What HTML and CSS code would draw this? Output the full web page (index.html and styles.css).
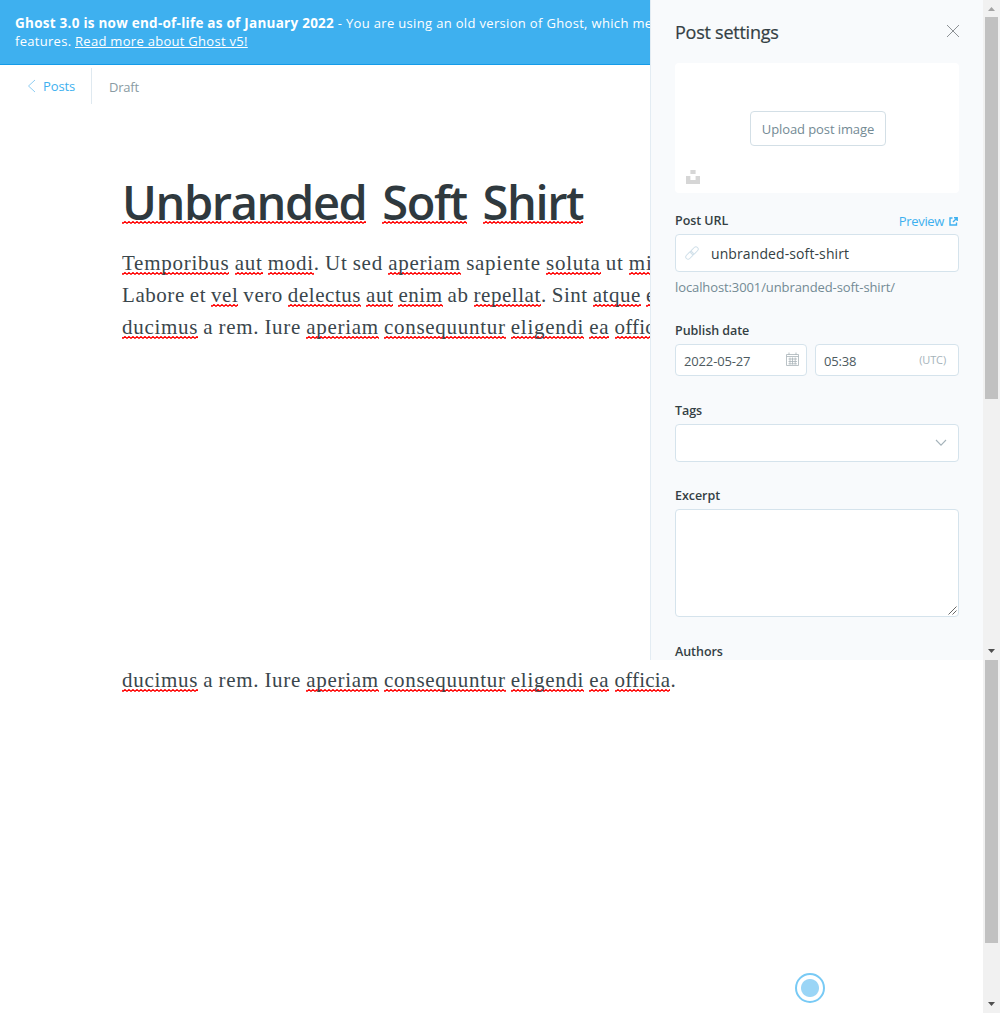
FILE: index.html
```html
<!DOCTYPE html>
<html lang="en">
<head>
<meta charset="utf-8">
<title>Post editor</title>
<link rel="stylesheet" href="styles.css">
</head>
<body>
<div class="app">
  <main class="editor">
    <div class="alert">
      <div class="alert-line"><b class="alert-strong">Ghost 3.0 is now end-of-life as of January 2022</b> <span class="alert-text">- You are using an old version of Ghost, which me</span></div>
      <div class="alert-line alert-second">features. <a class="alert-link">Read more about Ghost v5!</a></div>
    </div>
    <header class="toolbar">
      <a class="back"><svg width="9" height="14" viewBox="0 0 9 14"><path d="M8 1L1.5 7L8 13" fill="none" stroke="#8dcdf3"/></svg><span>Posts</span></a>
      <span class="status">Draft</span>
    </header>
    <h1 class="title"><u>Unbranded</u> <u>Soft</u> <u>Shirt</u></h1>
    <div class="prose">
      <div class="line l1"><u>Temporibus</u> <u>aut</u> <u>modi</u>. Ut sed <u>aperiam</u> sapiente <u>soluta</u> ut <u>mi</u></div>
      <div class="line l2">Labore et <u>vel</u> vero <u>delectus</u> <u>aut</u> <u>enim</u> ab <u>repellat</u>. Sint <u>atque</u> <u>e</u></div>
      <div class="line l3"><u>ducimus</u> a rem. Iure <u>aperiam</u> <u>consequuntur</u> <u>eligendi</u> <u>ea</u> <u class="tight">offic</u></div>
    </div>
    <div class="prose prose-tail">
      <div class="line l3"><u>ducimus</u> a rem. Iure <u>aperiam</u> <u>consequuntur</u> <u>eligendi</u> <u>ea</u> <u class="tight">officia</u>.</div>
    </div>
    <div class="beacon"></div>
  </main>

  <aside class="panel">
    <div class="panel-head">
      <h2 class="panel-title">Post settings</h2>
      <svg class="close" width="14" height="14" viewBox="0 0 14 14"><path d="M1 1L13 13M13 1L1 13" stroke="#808589" stroke-width=".9"/></svg>
    </div>
    <div class="uploader">
      <button class="upload-btn">Upload post image</button>
      <svg class="unsplash" width="14" height="14" viewBox="0 0 14 14"><path d="M4.400 0h5.200v4H4.400zM0 6h4.400v4h5.200V6H14v8H0z" fill="#d6d6d6"/></svg>
    </div>

    <div class="label-row">
      <label class="label">Post URL</label>
      <a class="preview"><span>Preview</span><svg width="9" height="9" viewBox="0 0 9 9"><path d="M3.500 1H1v7h6.500V5.500M5 .8h3.200V4M8 1L4 5" fill="none" stroke="#3eb0ef" stroke-width="1.400"/></svg></a>
    </div>
    <div class="field url">
      <svg width="14" height="14" viewBox="0 0 14 14"><g fill="none" stroke="#cfdfe9" transform="rotate(-45 7 7)"><rect x="-.8" y="4.700" width="8.600" height="4.600" rx="2.300"/><rect x="6.200" y="4.700" width="8.600" height="4.600" rx="2.300"/></g></svg>
      <span>unbranded-soft-shirt</span>
    </div>
    <p class="hint">localhost:3001/unbranded-soft-shirt/</p>

    <label class="label label-date">Publish date</label>
    <div class="date-row">
      <div class="field date"><span>2022-05-27</span><svg width="13" height="14" viewBox="0 0 13 14"><path d="M.5 2.500h12v11H.5zM.5 4.500h12M3 .5v2.500M10 .5v2.500M2.500 7h8.500M2.500 9.500h8.500M2.500 11.800h8.500M4 5.500v7M6.500 5.500v7M9.200 5.500v7" fill="none" stroke="#a9b4b9" stroke-width=".8"/></svg></div>
      <div class="field time"><span>05:38</span><small>(UTC)</small></div>
    </div>

    <label class="label label-tags">Tags</label>
    <div class="field tags"><svg width="12" height="8" viewBox="0 0 12 8"><path d="M1 1L6 6.200L11 1" fill="none" stroke="#a5b3ba" stroke-width="1.100"/></svg></div>

    <label class="label label-excerpt">Excerpt</label>
    <div class="field excerpt"><svg width="9" height="9" viewBox="0 0 9 9"><path d="M.5 8.500L8.500 .5M4.500 8.500L8.500 4.500" stroke="#555" stroke-width=".9"/></svg></div>

    <label class="label label-authors">Authors</label>
  </aside>

  <div class="scrollbar bar-top"><i class="arrow up"></i><i class="thumb"></i><i class="arrow down"></i></div>
  <div class="scrollbar bar-bottom"><i class="thumb"></i><i class="arrow down"></i></div>
</div>
</body>
</html>
```
FILE: styles.css
```css
* { box-sizing: border-box; }
body { margin: 0; background: #fff; font-family: "Open Sans", "Noto Sans", sans-serif; font-size: 13px; color: #343f44; overflow: hidden; }
.app { display: grid; grid-template-columns: 650px 333px 17px; grid-template-rows: 660px 353px; width: 1000px; height: 1013px; }
.editor { grid-column: 1 / 3; grid-row: 1 / 3; min-width: 0; position: relative; overflow: hidden; }
.alert { height: 65px; padding: 14px 15px 0; background: #3eb0ef; border-bottom: 1px solid #159be8; color: #fff; line-height: 18px; white-space: nowrap; font-weight: 500; }
.alert-line { height: 18px; letter-spacing: .33px; }
.alert-second { letter-spacing: .29px; }
.alert-strong { font-weight: 700; font-size: 13.5px; letter-spacing: .25px; }
.alert-link { text-decoration: underline; text-underline-offset: 1px; }
.toolbar { display: flex; padding-top: 3px; height: 39px; align-items: stretch; line-height: 34px; }
.back { display: flex; align-items: center; gap: 7px; width: 92px; padding-left: 27px; color: #3eb0ef; border-right: 1px solid #dfe9f0; letter-spacing: -.1px; }
.back span { margin-left: 0; }
.status { padding: 2px 0 0 17px; color: #8a9ba3; letter-spacing: -.2px; }
.title { margin: 70px 0 0 122px; height: 56px; font-size: 47px; line-height: 56px; font-weight: 600; letter-spacing: -1.4px; word-spacing: 5px; color: #2f393e; white-space: nowrap; }
u { text-decoration: none; background: url("data:image/svg+xml,%3Csvg xmlns='http://www.w3.org/2000/svg' width='4' height='3'%3E%3Cpath d='M-1 .4L1 2.500L3 .4L5 2.500' fill='none' stroke='red' stroke-width='1.100'/%3E%3C/svg%3E") 0 100% repeat-x; }
.title u { background-position: 0 51px; }
.prose { margin: 17px 0 0 122px; font: 21px/32px "Liberation Serif", serif; color: #3a464c; white-space: nowrap; word-spacing: -.8px; }
.l1 { letter-spacing: .74px; }
.l2 { letter-spacing: .55px; }
.l3 { letter-spacing: .71px; }
.tight { letter-spacing: .2px; }
.prose-tail { margin-top: 321px; }
.beacon { position: absolute; left: 795px; top: 973px; width: 30px; height: 30px; border: 2px solid #78caf5; border-radius: 50%; background: radial-gradient(circle, #9ad5f6 8.500px, #fff 9.500px); }

.panel { grid-column: 2; grid-row: 1; z-index: 1; background: #f8fafc; border-left: 1px solid #e3ecf3; padding: 20px 24px 0; overflow: hidden; }
.panel-head { display: flex; justify-content: space-between; height: 43px; }
.panel-title { margin: -1px 0 0; font-size: 18px; line-height: 26px; font-weight: 500; letter-spacing: -.25px; -webkit-text-stroke: .2px; }
.close { margin: 4px -1px 0 0; }
.uploader { display: flex; align-items: center; justify-content: center; position: relative; height: 130px; background: #fff; border-radius: 4px; }
.upload-btn { font: inherit; width: 136px; height: 35px; padding: 2px 0 0; border: 1px solid #d3dfe6; border-radius: 4px; background: #fff; color: #738a94; margin-left: 2px; letter-spacing: -.1px; }
.unsplash { position: absolute; left: 11px; top: 107px; }
.label { display: block; font-weight: 600; height: 18px; padding-top: 2px; line-height: 16px; font-size: 12.5px; letter-spacing: -.05px; }
.label-row { display: flex; justify-content: space-between; margin-top: 18px; height: 23px; }
.preview { display: flex; align-items: center; gap: 5px; height: 20px; color: #3eb0ef; letter-spacing: -.35px; }
.preview svg { margin-right: 1px; }
.field { display: flex; align-items: center; justify-content: space-between; background: #fff; border: 1px solid #d5e3ec; border-radius: 4px; }
.url { height: 38px; padding-left: 9px; justify-content: flex-start; gap: 12px; font-size: 14px; letter-spacing: .1px; }
.hint { margin: 6px 0 0; line-height: 19px; color: #738a94; letter-spacing: -.1px; }
.label-date { margin-top: 24px; }
.date-row { display: flex; gap: 8px; margin-top: 5px; }
.date-row .field { height: 32px; padding: 2px 8px 0; color: #4d5a60; letter-spacing: -.15px; }
.date { width: 132px; }
.time { flex: 1; }
.time small { font-size: 11px; color: #a5b3ba; margin: -3px 4px 0 0; font-weight: 400; }
.date svg { margin: -4px -1px 0 0; }
.label-tags { margin-top: 25px; }
.tags { height: 38px; margin-top: 5px; padding-right: 11px; justify-content: flex-end; }
.label-excerpt { margin-top: 24px; }
.excerpt { height: 108px; margin-top: 5px; padding: 0 1px 1px; align-items: flex-end; justify-content: flex-end; }
.label-authors { margin-top: 25px; }

.scrollbar { grid-column: 3; background: #f1f1f1; display: flex; flex-direction: column; align-items: center; justify-content: space-between; }
.bar-top { grid-row: 1; }
.bar-bottom { grid-row: 2; }
.thumb { width: 13px; height: 382px; background: #c1c1c1; }
.bar-top .thumb { margin-bottom: auto; }
.bar-bottom .thumb { height: 283px; }
.arrow { width: 7px; height: 4px; margin: 6px 0 7px; background: #505050; clip-path: polygon(0 0, 100% 0, 50% 100%); }
.up { margin: 7px 0 6px; background: #a3a3a3; clip-path: polygon(50% 0, 100% 100%, 0 100%); }
```
